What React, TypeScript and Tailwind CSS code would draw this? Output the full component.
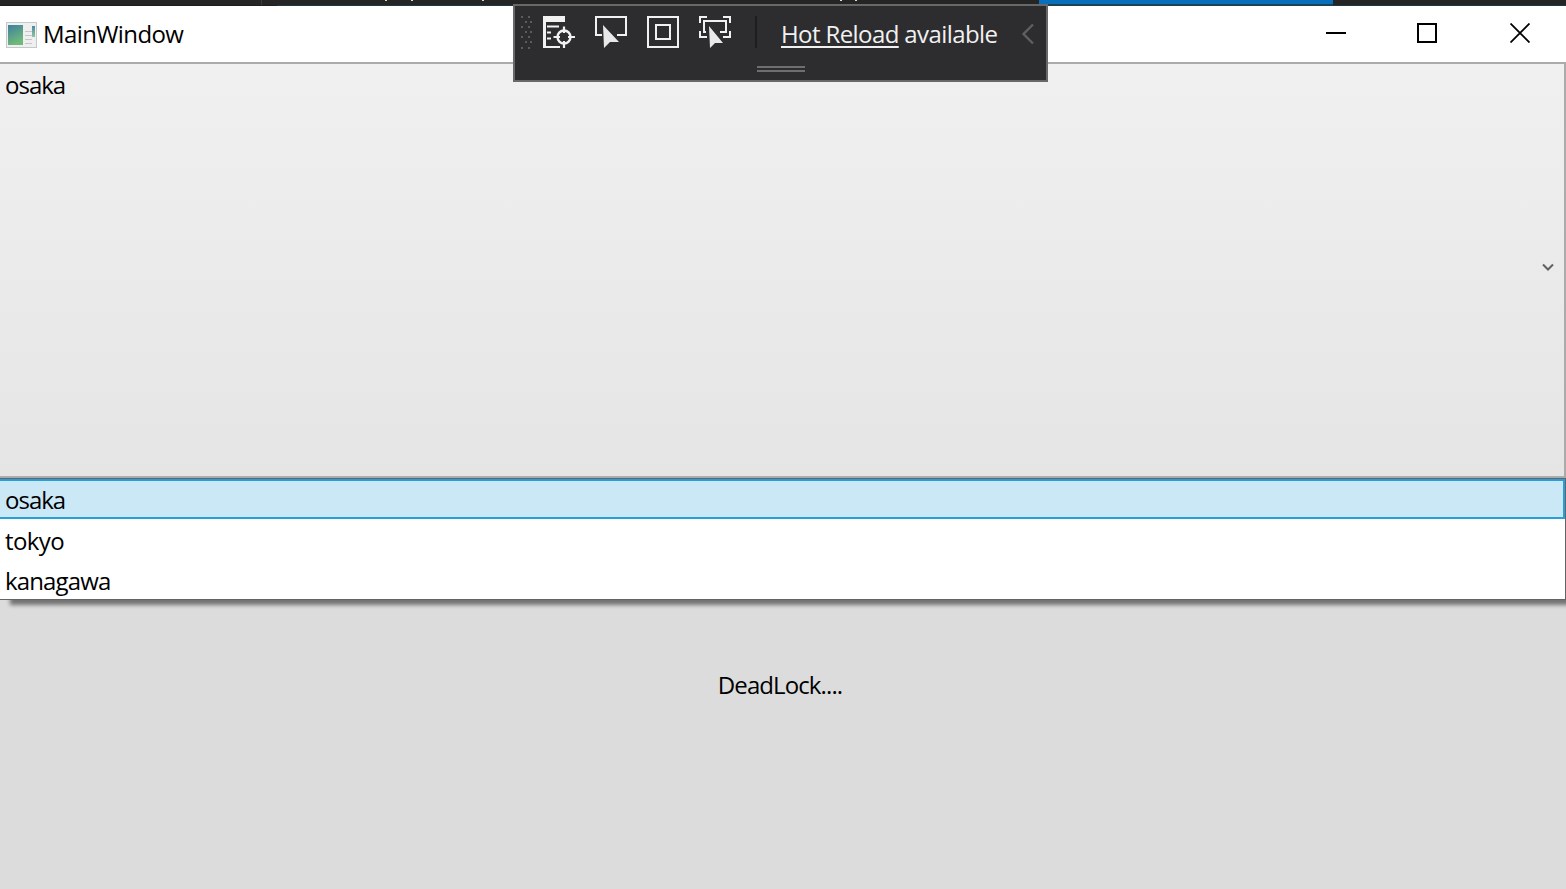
function TitleIcon() {
  return (
    <svg width="32" height="27" viewBox="0 0 32 27" className="shrink-0">
      <defs>
        <linearGradient id="pane" x1="0" y1="0" x2="0.4" y2="1">
          <stop offset="0" stopColor="#3f7fa0" />
          <stop offset="1" stopColor="#6fba78" />
        </linearGradient>
        <linearGradient id="side" x1="0" y1="0" x2="0" y2="1">
          <stop offset="0" stopColor="#4f87a5" />
          <stop offset="1" stopColor="#8cc6a0" />
        </linearGradient>
      </defs>
      <rect x="0.5" y="0.5" width="30" height="25" fill="#eef0f0" stroke="#c4c8ca" />
      <rect x="2" y="3" width="15" height="20" fill="url(#pane)" />
      <rect x="19" y="9" width="7" height="1" fill="#c6c6c6" />
      <rect x="19" y="13" width="7" height="1" fill="#c6c6c6" />
      <rect x="19" y="17" width="7" height="1" fill="#c6c6c6" />
      <rect x="19" y="21" width="7" height="1" fill="#c6c6c6" />
      <rect x="26" y="4" width="3" height="11" fill="url(#side)" />
    </svg>
  );
}

function LiveTreeIcon() {
  return (
    <svg width="32" height="32" viewBox="0 0 32 32" fill="none" className="shrink-0">
      <path d="M0 0H22V6H3V30H17V32H0Z" fill="#f1f1f1" />
      <path d="M4 10.5H16M4 16.5H8M4 22.5H8" stroke="#f1f1f1" strokeWidth="2" />
      <circle cx="21" cy="21" r="6.5" stroke="#f1f1f1" strokeWidth="2.4" />
      <path d="M10.5 21H17M25 21H32M21 10.5V17M21 25V32" stroke="#f1f1f1" strokeWidth="2.2" />
    </svg>
  );
}

function SelectIcon() {
  return (
    <svg width="32" height="32" viewBox="0 0 32 32" fill="none" className="shrink-0">
      <path d="M7 19H1V1H31V19H22" stroke="#f1f1f1" strokeWidth="2" />
      <path d="M8 9L24 26H15L9 32Z" fill="#e8e8e8" />
    </svg>
  );
}

function AdornerIcon() {
  return (
    <svg width="32" height="32" viewBox="0 0 32 32" fill="none" className="shrink-0">
      <rect x="1" y="1" width="30" height="30" stroke="#f1f1f1" strokeWidth="2" />
      <rect x="9" y="9" width="14" height="14" stroke="#f1f1f1" strokeWidth="2" />
    </svg>
  );
}

function TrackIcon() {
  return (
    <svg width="32" height="32" viewBox="0 0 32 32" fill="none" className="shrink-0">
      <path d="M8 1H1V7M24 1H31V7M1 15V21H8M31 15V21H24" stroke="#f1f1f1" strokeWidth="2" />
      <path d="M7 16H5V5H27V16H21" stroke="#f1f1f1" strokeWidth="2" />
      <path d="M10 10L24 27H16L11 32Z" fill="#e8e8e8" />
    </svg>
  );
}

function Grip() {
  return (
    <svg width="11" height="34" viewBox="0 0 11 34" className="shrink-0" fill="#5c5c5c">
      <rect x="0" y="0" width="2" height="2" /><rect x="7" y="0" width="2" height="2" />
      <rect x="4" y="5" width="2" height="2" /><rect x="9" y="5" width="2" height="2" />
      <rect x="0" y="10" width="2" height="2" /><rect x="7" y="10" width="2" height="2" />
      <rect x="4" y="15" width="2" height="2" /><rect x="9" y="15" width="2" height="2" />
      <rect x="0" y="20" width="2" height="2" /><rect x="7" y="20" width="2" height="2" />
      <rect x="4" y="25" width="2" height="2" /><rect x="9" y="25" width="2" height="2" />
      <rect x="0" y="31" width="2" height="2" /><rect x="7" y="31" width="2" height="2" />
    </svg>
  );
}

function Toolbar() {
  return (
    <div className="absolute left-[513px] top-[4px] w-[535px] h-[78px] border-2 border-[#686868] bg-[#2d2d30] z-20">
      <div className="flex items-start pl-[6px] pt-[10px]">
        <Grip />
        <div className="flex gap-[20px] ml-[11px]">
          <LiveTreeIcon />
          <SelectIcon />
          <AdornerIcon />
          <TrackIcon />
        </div>
        <div className="ml-[24px] w-[2px] h-[32px] bg-[#1e1e1e]" />
        <div className="ml-[24px] text-[24px] leading-[36px] text-[#f1f1f1] whitespace-nowrap">
          <span className="underline underline-offset-[3px] decoration-[2px]">Hot Reload</span> available
        </div>
      </div>
      <svg width="14" height="22" viewBox="0 0 14 22" fill="none" className="absolute left-[506px] top-[17px]">
        <path d="M12 1.5L2.5 11L12 20.5" stroke="#5f5f5f" strokeWidth="2.4" />
      </svg>
      <div className="absolute left-[242px] top-[60px] w-[48px] h-[6px] border-y-2 border-[#6e6e6e]" />
    </div>
  );
}

function TopStrip() {
  return (
    <div className="relative flex h-[6px] shrink-0 bg-[#252526]">
      <div className="h-full w-[277px] border-b border-[#1e1e1e]">
        <div className="ml-[261px] w-[1px] h-full bg-[#3a3a3a]" />
      </div>
      <div className="h-full w-[762px] border-b border-[#1c3a46]" />
      <div className="h-full w-[294px] border-b-2 border-[#1c4256] bg-[#0a6fba]" />
      <div className="h-full flex-1 border-b border-[#1c3a46]" />
      <span className="absolute left-[385px] top-0 w-[2px] h-[1px] bg-[#e8d8b0]" />
      <span className="absolute left-[411px] top-0 w-[2px] h-[1px] bg-[#d8e0e8]" />
      <span className="absolute left-[482px] top-0 w-[2px] h-[1px] bg-[#e8d8b0]" />
      <span className="absolute left-[840px] top-0 w-[2px] h-[1px] bg-[#d8e0e8]" />
      <span className="absolute left-[855px] top-0 w-[2px] h-[1px] bg-[#e8d8b0]" />
    </div>
  );
}

function TitleBar() {
  return (
    <div className="flex items-center h-[58px] shrink-0 bg-white border-b-2 border-[#ababab] pb-[2px]">
      <div className="ml-[6px] mt-[4px]"><TitleIcon /></div>
      <span className="ml-[5px] text-[24px] text-black leading-none mt-[2px]">MainWindow</span>
      <div className="ml-auto flex items-center mr-[36px]">
        <svg width="20" height="20" viewBox="0 0 20 20" fill="none">
          <path d="M0 10H20" stroke="#000" strokeWidth="2" />
        </svg>
        <svg width="20" height="20" viewBox="0 0 20 20" fill="none" className="ml-[71px]">
          <rect x="1" y="1" width="18" height="18" stroke="#000" strokeWidth="2" />
        </svg>
        <svg width="20" height="20" viewBox="0 0 20 20" fill="none" className="ml-[73px]">
          <path d="M0.5 0.5L19.5 19.5M19.5 0.5L0.5 19.5" stroke="#000" strokeWidth="1.8" />
        </svg>
      </div>
    </div>
  );
}

function Combo() {
  return (
    <div className="relative h-[414px] shrink-0 border-r-2 border-b-2 border-[#ababab] bg-gradient-to-b from-[#f0f0f0] to-[#e5e5e5]">
      <div className="pl-[5px] pt-[5px] text-[24px] leading-[32px] text-black tracking-[-1px]">osaka</div>
      <svg width="12" height="8" viewBox="0 0 12 8" fill="none" className="absolute right-[10px] top-[199px]">
        <path d="M1 1.5L6 6.5L11 1.5" stroke="#606060" strokeWidth="2" />
      </svg>
    </div>
  );
}

function DropList() {
  return (
    <div className="relative z-10 h-[122px] shrink-0 bg-white border-r border-t border-b border-[#646464] shadow-[10px_5px_4px_rgba(0,0,0,0.48)] text-[24px] text-black tracking-[-0.85px]">
      <div className="h-[40px] border-2 border-[#26a0da] bg-[#cbe8f6] border-l-0 pl-[5px] pt-[2px] flex items-center tracking-[-1px]">osaka</div>
      <div className="h-[40px] pl-[5px] pt-[3px] flex items-center tracking-[-0.6px]">tokyo</div>
      <div className="h-[40px] pl-[5px] pt-[3px] flex items-center">kanagawa</div>
    </div>
  );
}

export default function App() {
  return (
    <div className="relative flex h-[889px] w-[1566px] flex-col overflow-hidden bg-[#dcdcdc] font-['Open_Sans','Noto_Sans',sans-serif] tracking-[-0.6px]">
      <TopStrip />
      <TitleBar />
      <Combo />
      <DropList />
      <div className="flex flex-1 justify-center pr-[6px] pt-[67px] text-[24px] leading-[36px] text-black tracking-[-0.9px]">DeadLock....</div>
      <Toolbar />
    </div>
  );
}
